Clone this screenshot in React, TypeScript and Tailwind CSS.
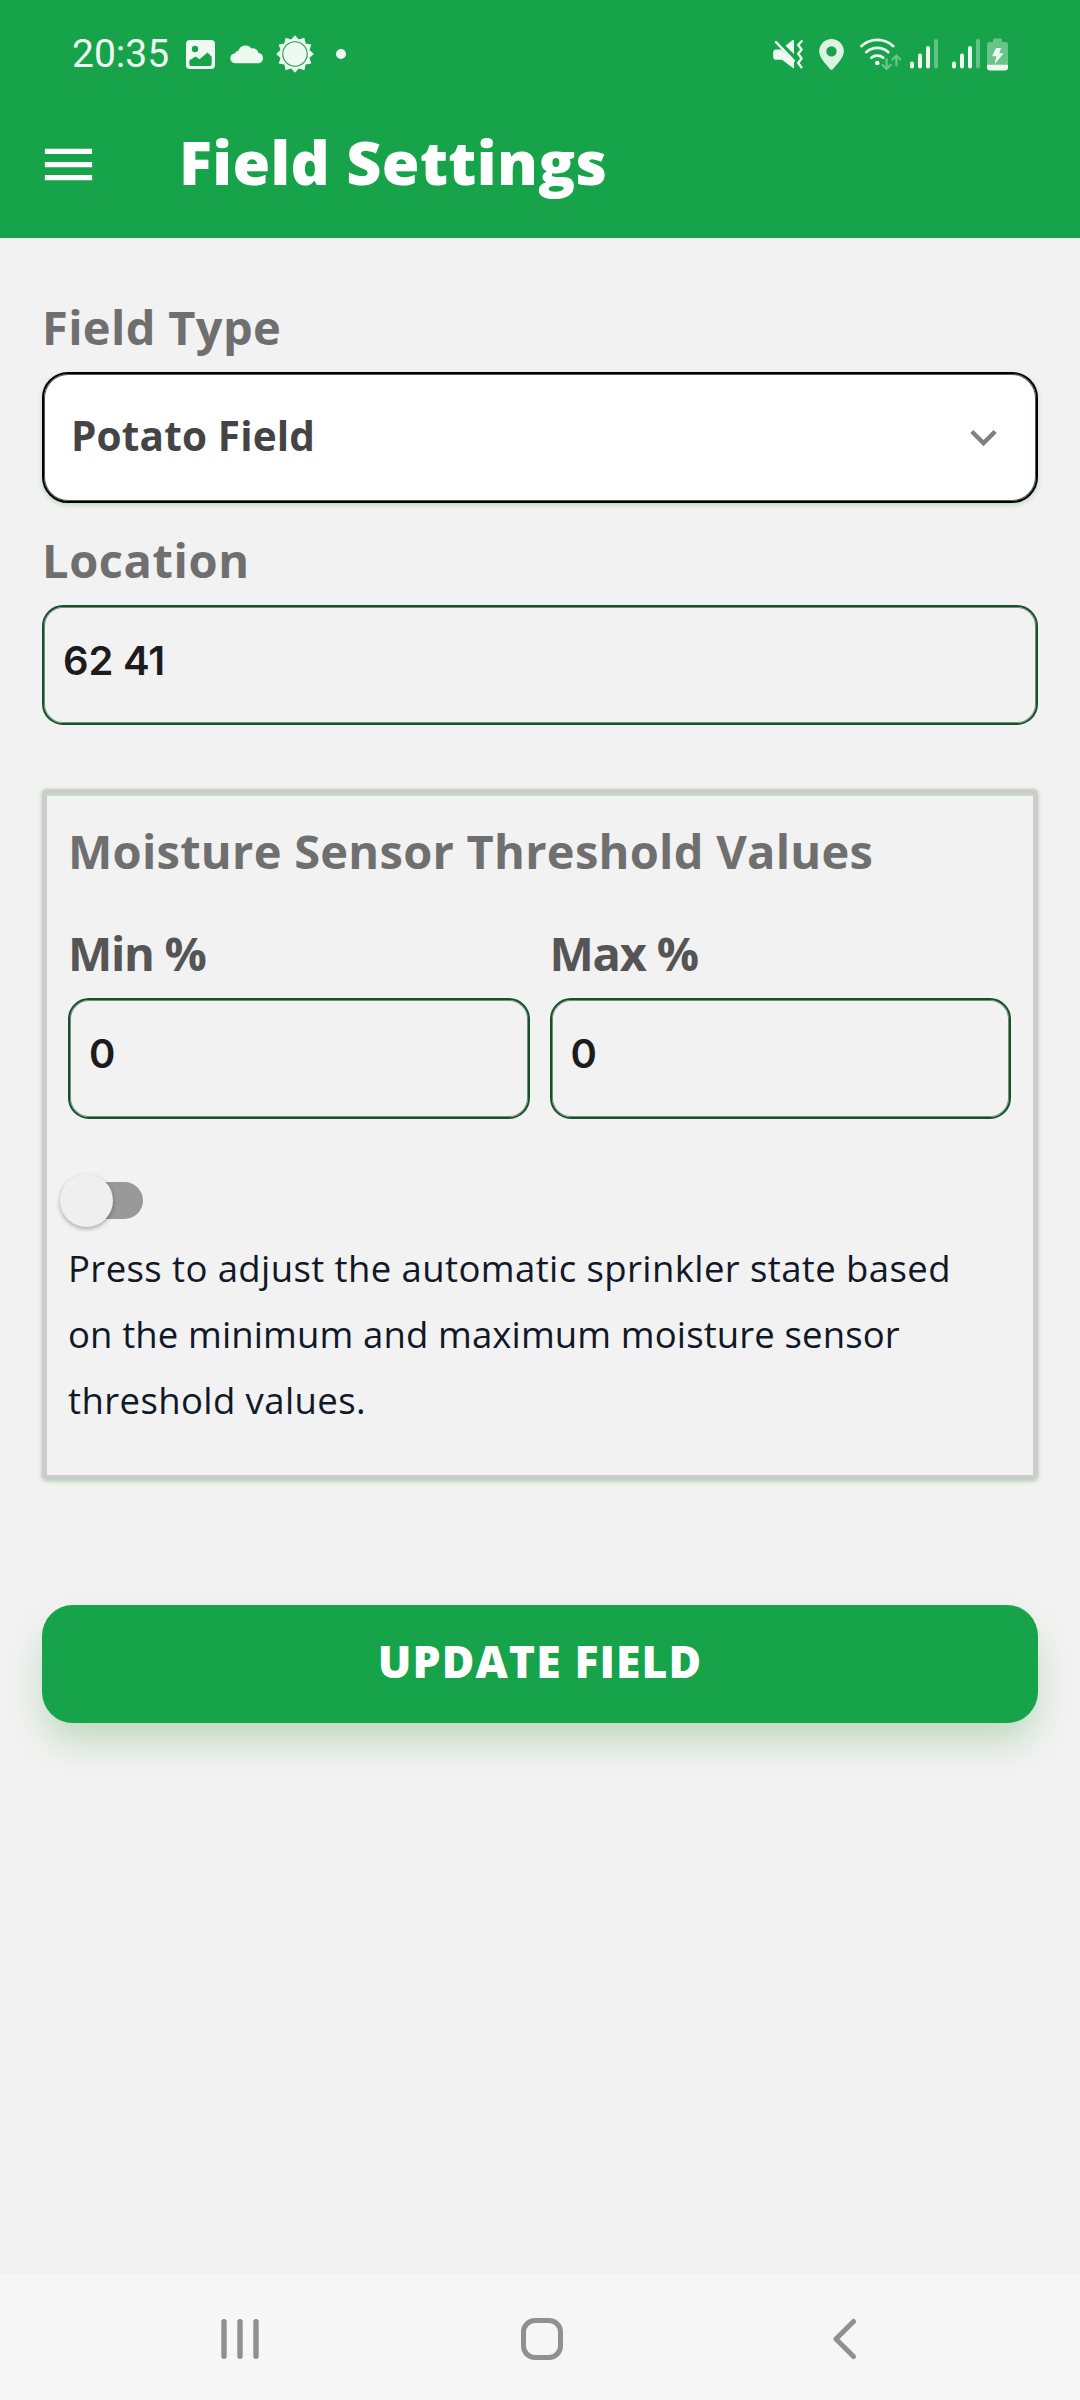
import React from "react";

const ink = "#eefaf1";

function SunIcon() {
  const points = Array.from({ length: 24 }, (_, i) => {
    const r = i % 2 === 0 ? 18.8 : 15;
    const a = (i * Math.PI) / 12;
    return `${(19 + r * Math.sin(a)).toFixed(2)},${(19 - r * Math.cos(a)).toFixed(2)}`;
  }).join(" ");
  return (
    <svg className="ml-[11px] h-[38px] w-[38px]" viewBox="0 0 38 38">
      <polygon points={points} fill={ink} />
      <circle cx="19" cy="19" r="12.2" fill={ink} stroke="#16a34a" strokeWidth="1.1" />
    </svg>
  );
}

function SignalIcon({ className }: { className: string }) {
  return (
    <svg className={className} viewBox="0 0 28 30" fill={ink}>
      <rect x="0" y="22.5" width="4" height="7" rx="1.8" />
      <rect x="8" y="14.5" width="4" height="15" rx="1.8" />
      <rect x="16" y="7" width="4" height="22.5" rx="1.8" />
      <rect x="24" y="0" width="4" height="29.5" rx="1.8" opacity="0.36" />
    </svg>
  );
}

function StatusBar() {
  return (
    <div className="flex h-[108px] items-center pr-[72px] pl-[72px]">
      <span className="w-[114px] font-[Roboto,sans-serif] text-[39px] leading-none text-[#eefaf1]">20:35</span>
      <svg className="h-[29px] w-[29px]" viewBox="0 0 29 29">
        <rect width="29" height="29" rx="4" fill={ink} />
        <circle cx="9" cy="9" r="3.2" fill="#16a34a" />
        <path d="M3.3 20.5 9.5 16.5l4 2.8 8-6.8 4.200 4.200v7.300a2 2 0 0 1-2 2H5.300a2 2 0 0 1-2-2z" fill="#16a34a" />
      </svg>
      <svg className="ml-[15px] h-[20px] w-[35px]" viewBox="0 0 35 20">
        <path d="M5.500 19.200a5 5 0 0 1-.4-10 3.600 3.600 0 0 1 3.400-2.400A7.300 7.300 0 0 1 21.500 4.500a5.800 5.800 0 0 1 7 4.500 5.200 5.200 0 0 1 .5 10.200z" fill={ink} />
      </svg>
      <SunIcon />
      <span className="ml-[22px] h-[10px] w-[10px] rounded-full bg-[#eefaf1]" />
      <svg className="ml-auto h-[31px] w-[31px]" viewBox="0 0 31 31">
        <path d="M2.500 10.500H8L21 21.500v8.200L9 20.800H2.500A2.300 2.300 0 0 1 .2 18.500v-5.600a2.400 2.400 0 0 1 2.300-2.400z" fill={ink} />
        <path d="M3 3.200 21 21.800" stroke={ink} strokeWidth="2.400" strokeLinecap="round" />
        <path d="M12.600 6.800 19 1.400q2-1.200 2 1v12.800z" fill={ink} />
        <path d="M28.600 2.200 25.200 6l3.400 4.400-3.400 4.400 3.400 4.600-3.400 4.600 3.200 4.200" fill="none" stroke={ink} strokeWidth="2.400" strokeLinecap="round" strokeLinejoin="round" />
      </svg>
      <svg className="ml-[15px] h-[31px] w-[25px]" viewBox="0 0 25 31">
        <path fillRule="evenodd" d="M12.500 0A12.300 12.300 0 0 1 24.800 12.300c0 6.500-6.300 12.500-10.800 17.600a2 2 0 0 1-3 0C6.500 24.800.2 18.800.2 12.300A12.300 12.300 0 0 1 12.500 0zm0 7.200a5.200 5.200 0 1 0 0 10.400 5.200 5.200 0 0 0 0-10.400z" fill={ink} opacity="0.92" />
      </svg>
      <svg className="ml-[16px] h-[32px] w-[41px]" viewBox="0 0 41 32" fill="none" strokeLinecap="round">
        <path d="M1.300 8.200a23.500 23.500 0 0 1 32 0" stroke={ink} strokeWidth="2.600" />
        <path d="M6.200 14.200a16.500 16.500 0 0 1 22.200 0" stroke={ink} strokeWidth="2.600" />
        <path d="M11.300 19.800a9.500 9.500 0 0 1 12 0" stroke={ink} strokeWidth="2.600" />
        <circle cx="17.300" cy="25" r="2.300" fill={ink} />
        <path d="M26.600 21v9.500m-4-3.500 4 3.800 4-3.800M36.400 27.500V18m-4 3.500 4-3.800 4 3.800" stroke={ink} strokeWidth="2.200" opacity="0.4" />
      </svg>
      <SignalIcon className="ml-[9px] h-[30px] w-[28px]" />
      <SignalIcon className="ml-[14px] h-[30px] w-[28px]" />
      <svg className="ml-[7px] h-[33px] w-[21px]" viewBox="0 0 21 33">
        <path d="M6 4V2a1.600 1.600 0 0 1 1.600-1.600h5.800A1.600 1.600 0 0 1 15 2v2h3.500A2.500 2.500 0 0 1 21 6.500V27H0V6.500A2.500 2.500 0 0 1 2.500 4z" fill={ink} opacity="0.38" />
        <path d="M0 26.800h21v2.700a3 3 0 0 1-3 3H3a3 3 0 0 1-3-3z" fill={ink} />
        <path d="M9 10h5.200l-2 5.200h4.300L7.500 26.500l1.800-8.300H5z" fill={ink} />
      </svg>
    </div>
  );
}

function Label({ children, className }: { children: string; className: string }) {
  return <div className={`h-[60px] text-[47px] leading-[62px] font-[660] whitespace-nowrap ${className}`}>{children}</div>;
}

function Field({ value, className }: { value: string; className: string }) {
  return (
    <div
      className={`flex items-center rounded-[21px] border-2 border-[#18502d] pb-[9px] pl-[19px] shadow-[inset_0_0_0_1px_#6a9277] ${className}`}
    >
      <span className="font-[Inter,sans-serif] text-[40px] leading-none font-semibold tracking-[-0.2px] text-[#1c1c1c]">{value}</span>
    </div>
  );
}

export default function App() {
  return (
    <div className="flex h-[2400px] w-[1080px] flex-col bg-[#f2f2f2] font-['Open_Sans',sans-serif]">
      <header className="h-[238px] bg-[#16a34a]">
        <StatusBar />
        <div className="flex h-[114px] items-center pl-[37px]">
          <svg className="mb-[2px] h-[63px] w-[63px]" viewBox="0 0 24 24" fill="#fff">
            <path d="M3 18h18v-2H3v2zm0-5h18v-2H3v2zm0-7v2h18V6H3z" />
          </svg>
          <h1 className="ml-[79px] pb-2 text-[61px] leading-none font-extrabold tracking-[0.350px] whitespace-nowrap text-white">
            Field Settings
          </h1>
        </div>
      </header>

      <main className="flex flex-1 flex-col px-[42px] pt-[58px]">
        <Label className="tracking-[0.350px] text-[#6f6f6f]">Field Type</Label>
        <div className="mt-4 flex h-[131px] items-center justify-between rounded-[26px] border-2 border-black bg-white pr-[26px] pl-[27px] shadow-[0_2px_5px_rgba(70,160,70,0.3),inset_0_0_0_1px_#555]">
          <span className="pb-[3px] text-[40.500px] leading-none font-[660] tracking-[0.150px] text-[#444]">Potato Field</span>
          <svg className="h-[53px] w-[53px]" viewBox="0 0 24 24" fill="#808080">
            <path d="M7.410 8.590 12 13.170l4.590-4.580L18 10l-6 6-6-6z" />
          </svg>
        </div>

        <Label className="mt-[26px] tracking-[0.600px] text-[#6f6f6f]">Location</Label>
        <Field value="62 41" className="mt-4 h-[120px]" />

        <section className="mt-16 h-[691px] rounded-[5px] border-[5px] border-[#ccc] pt-[26px] pr-[22px] pl-[21px] shadow-[0_1px_4px_rgba(70,160,70,0.45),inset_0_2px_0_#c8dcc8]">
          <Label className="tracking-[0.270px] text-[#6f6f6f]">Moisture Sensor Threshold Values</Label>
          <div className="mt-[42px] grid grid-cols-2 gap-5">
            <div>
              <Label className="tracking-[-1.300px] text-[#555]">Min %</Label>
              <Field value="0" className="mt-4 h-[121px]" />
            </div>
            <div>
              <Label className="tracking-[-1.200px] text-[#555]">Max %</Label>
              <Field value="0" className="mt-4 h-[121px]" />
            </div>
          </div>

          <div className="mt-[54px] -ml-2 flex h-[53px] w-[83px] items-center" role="switch" aria-checked="false">
            <span className="z-10 mt-[2px] h-[53px] w-[53px] shrink-0 rounded-full bg-[#efefef] shadow-[0_2px_4px_rgba(0,0,0,0.3)]" />
            <span className="mt-[2px] -ml-[40px] h-[37px] w-[70px] shrink-0 rounded-full bg-[#999]" />
          </div>

          <p className="mt-[9px] text-[36.500px] leading-[66px] whitespace-nowrap text-[#111827]">
            <span className="block tracking-[0.400px]">Press to adjust the automatic sprinkler state based</span>
            <span className="block tracking-[0.120px]">on the minimum and maximum moisture sensor</span>
            <span className="block tracking-[0.400px]">threshold values.</span>
          </p>
        </section>

        <button className="mt-[125px] flex h-[118px] items-center justify-center rounded-[31px] bg-[#16a34a] pb-1.5 text-[44.500px] font-extrabold tracking-[1.100px] text-white shadow-[0_20px_36px_-4px_rgba(70,160,70,0.320)]">
          UPDATE FIELD
        </button>
      </main>

      <nav className="flex h-[126px] items-center justify-between bg-[#f6f6f6] pt-1 pr-[214px] pl-[219px]">
        <svg className="h-[42px] w-[42px]" viewBox="0 0 42 42" stroke="#909090" strokeWidth="5.400" strokeLinecap="round">
          <path d="M5 3.700v34.600M21 3.700v34.600M37 3.700v34.600" />
        </svg>
        <svg className="mr-[1px] h-[42px] w-[42px]" viewBox="0 0 42 42" fill="none" stroke="#909090" strokeWidth="5">
          <rect x="2.500" y="2.500" width="37" height="37" rx="11.500" />
        </svg>
        <svg className="h-[42px] w-[42px]" viewBox="0 0 42 42" fill="none" stroke="#909090" strokeWidth="5" strokeLinecap="round" strokeLinejoin="round">
          <path d="M29.500 3.500 12 21l17.500 17.500" />
        </svg>
      </nav>
    </div>
  );
}
